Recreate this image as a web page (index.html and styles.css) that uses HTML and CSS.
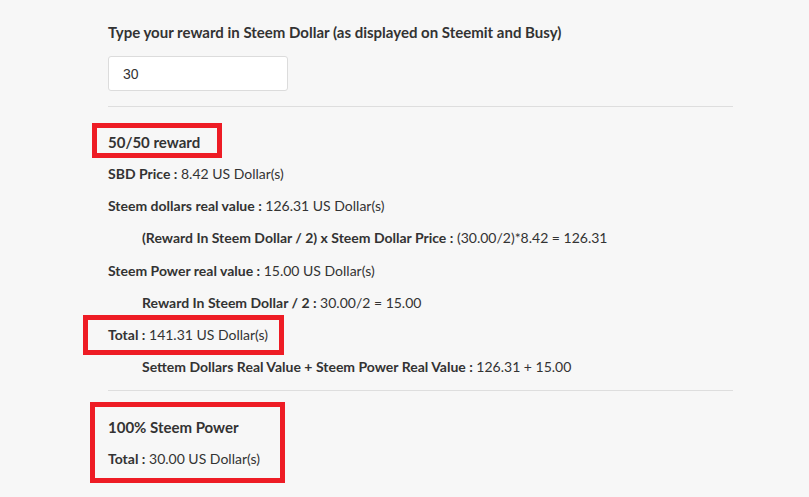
FILE: index.html
```html
<!DOCTYPE html>
<html>
<head>
<meta charset="utf-8">
<link rel="stylesheet" href="styles.css">
</head>
<body>
<div class="page">
  <div class="form-group">
    <label class="main-label">Type your reward in Steem Dollar (as displayed on Steemit and Busy)</label>
    <input class="reward-input" type="text" value="30">
  </div>
  <hr class="sep">
  <section class="block">
    <h3 class="title">50/50 reward</h3>
    <p class="row"><b>SBD Price :</b> 8.42 US Dollar(s)</p>
    <p class="row"><b>Steem dollars real value :</b> 126.31 US Dollar(s)</p>
    <p class="row sub"><b>(Reward In Steem Dollar / 2) x Steem Dollar Price :</b> (30.00/2)*8.42 = 126.31</p>
    <p class="row"><b>Steem Power real value :</b> 15.00 US Dollar(s)</p>
    <p class="row sub"><b>Reward In Steem Dollar / 2 :</b> 30.00/2 = 15.00</p>
    <p class="row"><b>Total :</b> 141.31 US Dollar(s)</p>
    <p class="row sub"><b>Settem Dollars Real Value + Steem Power Real Value :</b> 126.31 + 15.00</p>
  </section>
  <hr class="sep sep2">
  <section class="block block2">
    <h3 class="title">100% Steem Power</h3>
    <p class="row"><b>Total :</b> 30.00 US Dollar(s)</p>
  </section>
</div>
<div class="mark mark1"></div>
<div class="mark mark2"></div>
<div class="mark mark3"></div>
</body>
</html>
```
FILE: styles.css
```css
html, body {
  margin: 0;
  padding: 0;
  background: #f7f7f7;
}
body {
  font-family: Lato, "Liberation Sans", sans-serif;
  color: #333;
  width: 809px;
  height: 497px;
  overflow: hidden;
  position: relative;
}
.page {
  margin-left: 108px;
  width: 625px;
  padding-top: 22px;
}
.form-group {
  display: flex;
  flex-direction: column;
  align-items: flex-start;
}
.main-label {
  font-size: 15px;
  font-weight: 700;
  line-height: 20px;
}
.reward-input {
  margin-top: 14px;
  width: 180px;
  height: 35px;
  box-sizing: border-box;
  border: 1px solid #dcdcdc;
  border-radius: 3px;
  background: #fff;
  padding: 0 14px;
  font-family: "Liberation Sans", Arial, sans-serif;
  font-size: 14px;
  color: #333;
  outline: none;
}
.sep {
  border: 0;
  border-top: 1px solid #dedede;
  margin: 15px 0 0 0;
  height: 0;
}
.sep2 {
  margin-top: 13px;
}
.block {
  padding-top: 25px;
}
.block2 {
  padding-top: 26px;
}
.title {
  margin: 0;
  font-size: 15px;
  font-weight: 700;
  line-height: 20px;
}
.row {
  margin: 12.17px 0 0 0;
  font-size: 14px;
  line-height: 20px;
}
.row b {
  font-weight: 700;
}
.sub {
  padding-left: 34px;
}
.mark {
  position: absolute;
  border: 5px solid #ee1c25;
  box-sizing: border-box;
}
.mark1 { left: 92px; top: 123px; width: 130px; height: 35px; }
.mark2 { left: 83px; top: 315px; width: 201px; height: 40px; }
.mark3 { left: 90px; top: 402px; width: 195px; height: 81px; }
```
